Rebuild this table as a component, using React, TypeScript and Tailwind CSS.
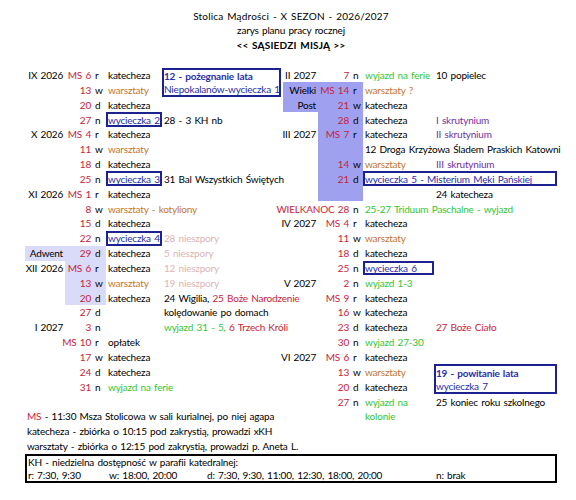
import React from "react";

type Cell = { t?: React.ReactNode; c?: string; r?: boolean; span?: boolean };

const GRID =
  "grid grid-cols-[40px_28px_13px_56px_119px_37px_33px_12px_71px_123px] h-[14.857px]";

const RED = "text-[#c81e3a]";
const OR = "text-[#c5752d]";
const GR = "text-[#33c633]";
const PU = "text-[#7030a0]";
const PK = "text-[#dcb4b4]";
const HI = "bg-[#9fa1f0]";
const LHI = "bg-[#d9dbf8]";
const BOX = "border-2 border-[#1c2390] !pl-0 text-[#2a2ea8]";
const BOXT = "border-t-2 border-x-2 border-[#1c2390] !pl-0 text-[#2a2ea8]";
const BOXB = "border-b-2 border-x-2 border-[#1c2390] !pl-0 text-[#2a2ea8]";

const _: Cell = {};
const m = (t: React.ReactNode, c = ""): Cell => ({ t, r: true, c });
const l = (t: React.ReactNode, c = ""): Cell => ({ t, c });

function Row({ cells }: { cells: Cell[] }) {
  return (
    <div className={GRID}>
      {cells.map((c, i) => (
        <div
          key={i}
          className={`flex items-center whitespace-nowrap ${
            c.r ? "justify-end pr-[2px]" : "justify-start pl-[2px]"
          } ${c.span ? "col-span-2" : ""} ${c.c ?? ""}`}
        >
          <span>{c.t}</span>
        </div>
      ))}
    </div>
  );
}

const E5 = [_, _, _, _, _];
const HIA = "bg-[#9fa1f0] ml-[2px]";

const rows: Cell[][] = [
  [m("IX 2026"), m("MS 6", RED), l("r"), l("katecheza"), l(<b>12 - pożegnanie lata</b>, BOXT),
   m("II 2027"), m("7", RED), l("n"), l("wyjazd na ferie", GR), l("10 popielec")],
  [_, m("13", RED), l("w"), l("warsztaty", OR), l("Niepokalanów-wycieczka 1", BOXB),
   m("Wielki", HIA), m("MS 14", `${RED} ${HI}`), l("r", HI), l("warsztaty ?", OR), _],
  [_, m("20", RED), l("d"), l("katecheza"), _,
   m("Post", HIA), m("21", `${RED} ${HI}`), l("w", HI), l("katecheza"), _],
  [_, m("27", RED), l("n"), l("wycieczka 2", BOX), l("28 - 3 KH nb"),
   _, m("28", `${RED} ${HI}`), l("d", HI), l("katecheza"), l("I skrutynium", PU)],
  [m("X 2026"), m("MS 4", RED), l("r"), l("katecheza"), _,
   m("III 2027"), m("MS 7", `${RED} ${HI}`), l("r", HI), l("katecheza"), l("II skrutynium", PU)],
  [_, m("11", RED), l("w"), l("warsztaty", OR), _,
   _, m("", HI), l("", HI), l("12 Droga Krzyżowa Śladem Praskich Katowni"), _],
  [_, m("18", RED), l("d"), l("katecheza"), _,
   _, m("14", `${RED} ${HI}`), l("w", HI), l("warsztaty", OR), l("III skrutynium", PU)],
  [_, m("25", RED), l("n"), l("wycieczka 3", BOX), l("31 Bal Wszystkich Świętych"),
   _, m("21", `${RED} ${HI}`), l("d", HI), { t: "wycieczka 5 - Misterium Męki Pańskiej", c: BOX, span: true }],
  [m("XI 2026"), m("MS 1", RED), l("r"), l("katecheza"), _,
   _, m("", HI), l("", HI), _, l("24 katecheza")],
  [_, m("8", RED), l("w"), l("warsztaty - kotyliony", OR), _,
   { t: "WIELKANOC 28", r: true, c: RED, span: true }, l("n"), l("25-27 Triduum Paschalne - wyjazd", GR), _],
  [_, m("15", RED), l("d"), l("katecheza"), _,
   m("IV 2027"), m("MS 4", RED), l("r"), l("katecheza"), _],
  [_, m("22", RED), l("n"), l("wycieczka 4", BOX), l("28 nieszpory", PK),
   _, m("11", RED), l("w"), l("warsztaty", OR), _],
  [m("Adwent", LHI), m("29", `${RED} ${LHI}`), l("d", LHI), l("katecheza"), l("5 nieszpory", PK),
   _, m("18", RED), l("d"), l("katecheza"), _],
  [m("XII 2026"), m("MS 6", `${RED} ${LHI}`), l("r", LHI), l("katecheza"), l("12 nieszpory", PK),
   _, m("25", RED), l("n"), l("wycieczka 6", BOX), _],
  [_, m("13", `${RED} ${LHI}`), l("w", LHI), l("warsztaty", OR), l("19 nieszpory", PK),
   m("V 2027"), m("2", RED), l("n"), l("wyjazd 1-3", GR), _],
  [_, m("20", `${RED} ${LHI}`), l("d", LHI), l("katecheza"),
   l(<>24 Wigilia, <span className={RED}>25 Boże Narodzenie</span></>),
   _, m("MS 9", RED), l("r"), l("katecheza"), _],
  [_, m("27", RED), l("d"), _, l("kolędowanie po domach"),
   _, m("16", RED), l("w"), l("katecheza"), _],
  [m("I 2027"), m("3", RED), l("n"), _,
   l(<><span className={GR}>wyjazd 31 - 5, </span><span className={RED}>6 Trzech Króli</span></>),
   _, m("23", RED), l("d"), l("katecheza"), l("27 Boże Ciało", RED)],
  [_, m("MS 10", RED), l("r"), l("opłatek"), _,
   _, m("30", RED), l("n"), l("wyjazd 27-30", GR), _],
  [_, m("17", RED), l("w"), l("katecheza"), _,
   m("VI 2027"), m("MS 6", RED), l("r"), l("katecheza"), _],
  [_, m("24", RED), l("d"), l("katecheza"), _,
   _, m("13", RED), l("w"), l("warsztaty", OR), l(<b>19 - powitanie lata</b>, BOXT)],
  [_, m("31", RED), l("n"), l("wyjazd na ferie", GR), _,
   _, m("20", RED), l("d"), l("katecheza"), l("wycieczka 7", BOXB)],
  [...E5, _, m("27", RED), l("n"), l("wyjazd na", GR), l("25 koniec roku szkolnego")],
  [l(<><span className={RED}>MS</span> - 11:30 Msza Stolicowa w sali kurialnej, po niej agapa</>), _, _, _, _,
   _, _, _, l("kolonie", GR), _],
  [l("katecheza - zbiórka o 10:15 pod zakrystią, prowadzi xKH")],
  [l("warsztaty - zbiórka o 12:15 pod zakrystią, prowadzi p. Aneta L.")],
];

export default function App() {
  return (
    <div className="w-[576px] h-[500px] bg-white pt-[8.2px] pl-[25px] font-['Lato',sans-serif] text-[10px] leading-none tracking-[-0.2px] [word-spacing:1px] text-black">
      <div className="w-[532px]">
        <div className="h-[14.857px] flex items-center justify-center tracking-[0.2px]">Stolica Mądrości - X SEZON - 2026/2027</div>
        <div className="h-[14.857px] flex items-center justify-center">zarys planu pracy rocznej</div>
        <div className="h-[14.857px] flex items-center justify-center font-bold tracking-[0.2px]">&lt;&lt; SĄSIEDZI MISJĄ &gt;&gt;</div>
        <div className="h-[14.857px]" />
        {rows.map((r, i) => (
          <Row key={i} cells={r} />
        ))}
        <div className="h-[29.714px] border-2 border-black flex flex-col justify-center">
          <div className="h-[13px] flex items-center pl-[1px]">KH - niedzielna dostępność w parafii katedralnej:</div>
          <div className="h-[13px] grid grid-cols-[81px_98px_229px_1fr] items-center pl-[1px]">
            <span>r: 7:30, 9:30</span>
            <span>w: 18:00, 20:00</span>
            <span>d: 7:30, 9:30, 11:00, 12:30, 18:00, 20:00</span>
            <span>n: brak</span>
          </div>
        </div>
      </div>
    </div>
  );
}
